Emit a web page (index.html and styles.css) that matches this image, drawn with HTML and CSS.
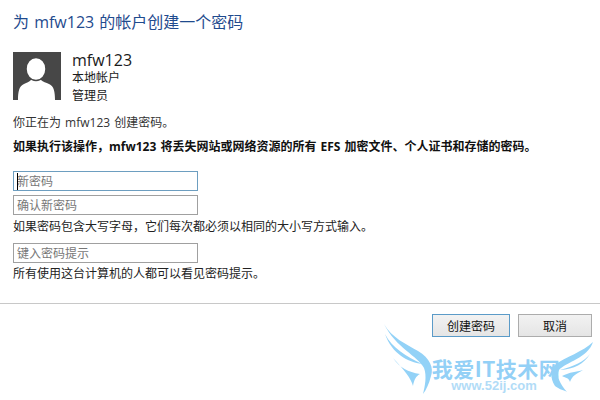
FILE: index.html
```html
<!DOCTYPE html>
<html>
<head>
    <title>创建密码</title>
    <link rel="stylesheet" href="styles.css">
</head>
<body>
    <div class="page">
        <div class="content">
            <h1 class="title">为 mfw123 的帐户创建一个密码</h1>
            <div class="account">
                <svg class="avatar" width="48" height="48" viewBox="0 0 48 48">
                    <rect width="48" height="48" fill="#474747"/>
                    <path d="M5 48 C5 40 6 34 11 32 C14 30.5 16 30 18 28 L28 28 C30 30 33 30.5 36 32 C41 34 42 40 42 48 Z" fill="#fff"/>
                    <ellipse cx="23" cy="17" rx="10" ry="11.5" fill="#fff" stroke="#474747" stroke-width="1.5"/>
                </svg>
                <div class="account-info">
                    <div class="account-name">mfw123</div>
                    <div class="account-line">本地帐户</div>
                    <div class="account-line">管理员</div>
                </div>
            </div>
            <p class="intro">你正在为 mfw123 创建密码。</p>
            <p class="warning">如果执行该操作，mfw123 将丢失网站或网络资源的所有 EFS 加密文件、个人证书和存储的密码。</p>
            <form class="fields">
                <div class="field field-focus"><span class="caret"></span>新密码</div>
                <div class="field field-second">确认新密码</div>
                <div class="hint hint-first">如果密码包含大写字母，它们每次都必须以相同的大小写方式输入。</div>
                <div class="field field-third">键入密码提示</div>
                <div class="hint">所有使用这台计算机的人都可以看见密码提示。</div>
            </form>
        </div>
        <div class="footer">
            <button class="btn btn-default" type="button">创建密码</button>
            <button class="btn btn-cancel" type="button">取消</button>
        </div>
    </div>

    <!-- watermark over the footer -->
    <div class="watermark">
        <svg class="wings" width="216" height="76" viewBox="0 0 216 76">
            <g fill="#93d2f7">
                <path d="M0 0 C8 14 22 20 34 27 C46 34 50 44 47 52 C45 60 42 66 39 70 C41 62 43 52 40 44 C34 32 12 24 0 0 Z"/>
                <path d="M1 10 C8 24 22 32 38 40 C24 38 8 30 1 10 Z"/>
                <path d="M9 34 C16 44 24 48 36 50 C32 52 30 56 29 62 C27 54 20 46 9 34 Z"/>
                <path d="M209 18 C200 27 180 34 172 40 C166 45 166 54 171 62 C176 66 180 66 183 68 C176 60 172 52 175 46 C182 38 204 34 209 18 Z"/>
                <path d="M206 30 C200 38 190 42 176 46 C190 45 200 40 206 30 Z"/>
                <path d="M199 46 C192 48 186 48 178 52 C182 54 185 54 186 58 C188 52 192 50 199 46 Z"/>
            </g>
        </svg>
        <div class="wm-name">我爱IT技术网</div>
        <div class="wm-url">www.52ij.com</div>
    </div>
</body>
</html>
```

FILE: styles.css
```css
* {
    margin: 0;
    padding: 0;
    box-sizing: border-box;
}

body {
    background: #fff;
    color: #1a1a1a;
    font-family: "Open Sans", "Noto Sans CJK SC", sans-serif;
    font-size: 12px;
    width: 600px;
    height: 400px;
    overflow: hidden;
    position: relative;
}

.page {
    height: 400px;
    display: flex;
    flex-direction: column;
}

.content {
    height: 304px;
    padding: 12px 13px 0;
    border-bottom: 1px solid #c8c8c8;
    flex: none;
}

.title {
    font-size: 16px;
    font-weight: 400;
    color: #1f4b8e;
    line-height: 20px;
    word-spacing: 1px;
}

.account {
    display: flex;
    gap: 11px;
    margin-top: 20px;
}

.avatar {
    display: block;
}

.account-name {
    font-size: 16px;
    line-height: 17px;
}

.account-line {
    font-size: 12px;
    line-height: 18px;
}

.intro {
    margin-top: 9px;
    line-height: 17px;
    color: #333;
    word-spacing: 1px;
}

.warning {
    margin-top: 7px;
    line-height: 17px;
    font-weight: 700;
    color: #111;
    word-spacing: 1px;
}

.fields {
    margin-top: 16px;
}

.field {
    width: 185px;
    height: 20px;
    border: 1px solid #a0a0a0;
    color: #777;
    line-height: 18px;
    padding: 1px 0 0 3px;
    position: relative;
}

.field-focus {
    border-color: #6d9ec0;
}

.caret {
    position: absolute;
    left: 3px;
    top: 1px;
    width: 1px;
    height: 17px;
    background: #000;
}

.field-second {
    margin-top: 4px;
}

.field-third {
    margin-top: 8px;
}

.hint {
    line-height: 17px;
    margin-top: 2px;
    color: #222;
}

.hint-first {
    margin-top: 3px;
}

.footer {
    display: flex;
    justify-content: flex-end;
    gap: 8px;
    padding: 10px 8px 0 0;
}

.btn {
    width: 78px;
    height: 23px;
    font: inherit;
    color: #111;
    border: 1px solid #acacac;
    background: linear-gradient(#f2f2f2, #e5e5e5);
}

.btn-cancel {
    width: 74px;
}

.btn-default {
    border-color: #5b9bc8;
}

.watermark {
    position: absolute;
    left: 384px;
    top: 324px;
    width: 216px;
    height: 76px;
    text-align: center;
}

.wings {
    position: absolute;
    left: 0;
    top: 0;
}

.wm-name {
    position: absolute;
    left: 0;
    right: 0;
    top: 33px;
    padding-left: 8px;
    font-size: 21px;
    line-height: 22px;
    font-weight: 700;
    letter-spacing: 0.5px;
    color: #93d0f6;
    font-family: "Noto Sans CJK SC", sans-serif;
}

.wm-url {
    position: absolute;
    left: 0;
    right: 0;
    top: 55px;
    padding-left: 4px;
    font-size: 13px;
    line-height: 14px;
    font-weight: 700;
    color: #b2dcf7;
    font-family: "Liberation Sans", sans-serif;
}
```
